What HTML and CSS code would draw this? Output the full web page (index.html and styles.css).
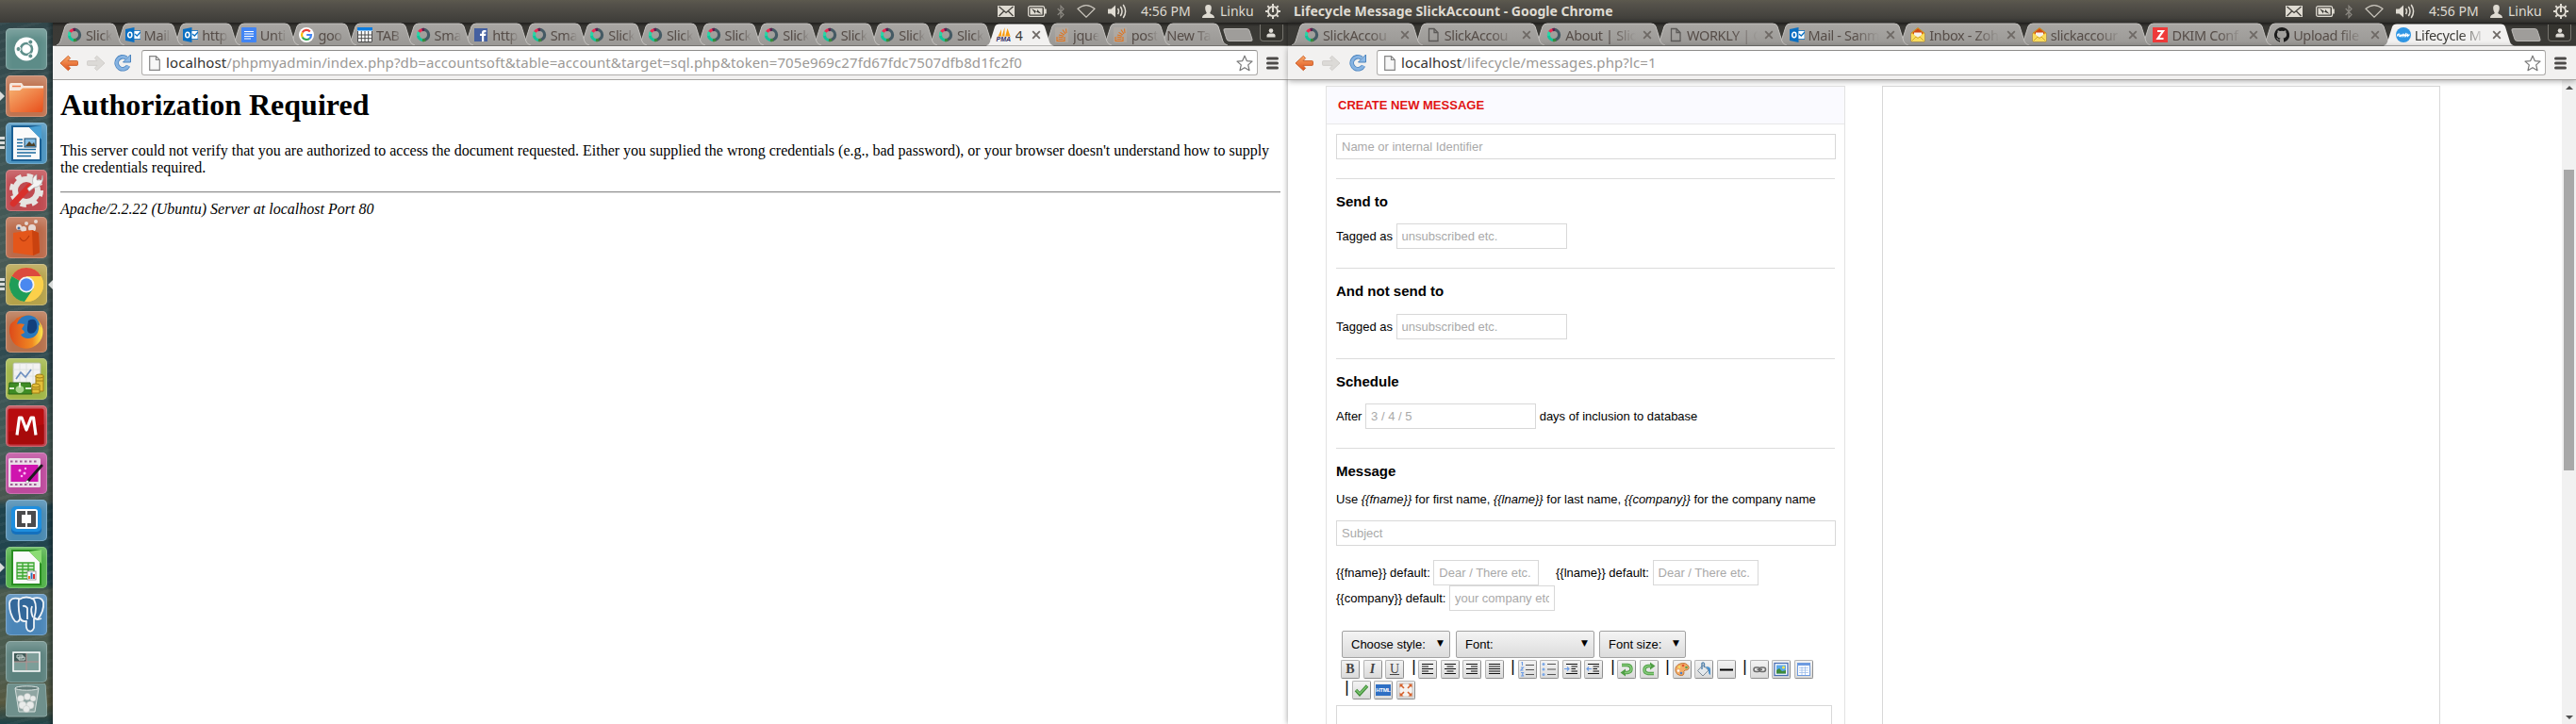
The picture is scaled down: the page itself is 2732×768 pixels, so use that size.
FILE: index.html
```html
<!DOCTYPE html>
<html lang="en">
<head>
<meta charset="utf-8">
<title>Lifecycle Message SlickAccount</title>
<link rel="stylesheet" href="styles.css">
</head>
<body>
<svg class="defs" width="0" height="0">
  <defs>
    <linearGradient id="gTab" x1="0" y1="0" x2="0" y2="1"><stop offset="0" stop-color="#a9a7a4"/><stop offset="1" stop-color="#9a9895"/></linearGradient>
    <linearGradient id="gOrange" x1="0" y1="0" x2="0" y2="1"><stop offset="0" stop-color="#f8a868"/><stop offset="1" stop-color="#e0521c"/></linearGradient>
    <linearGradient id="gFolder" x1="0" y1="0" x2="1" y2="1"><stop offset="0" stop-color="#f6b070"/><stop offset="1" stop-color="#e84e1a"/></linearGradient>
    <linearGradient id="gFox" x1="0" y1="0" x2="1" y2="0"><stop offset="0" stop-color="#dd4b1a"/><stop offset=".7" stop-color="#f08a22"/><stop offset="1" stop-color="#fbe34c"/></linearGradient>
  </defs>
  <symbol id="tab-s" viewBox="0 0 72 24"><path d="M0 24Q3 23 4 20L9 4Q10 1 14 1H57Q61 1 62 4L67 20Q68 23 72 24Z" fill="url(#gTab)"/><path d="M0 24Q3 23 4 20L9 4Q10 1 14 1H57Q61 1 62 4L67 20Q68 23 72 24" fill="none" stroke="#c3c1be" stroke-width="1"/></symbol>
  <symbol id="tab-s-on" viewBox="0 0 72 24"><path d="M0 24Q3 23 4 20L9 4Q10 1 14 1H57Q61 1 62 4L67 20Q68 23 72 24Z" fill="#f2f1f0"/></symbol>
  <symbol id="tab-l" viewBox="0 0 139 24"><path d="M0 24Q3 23 4 20L9 4Q10 1 14 1H124Q128 1 129 4L134 20Q135 23 139 24Z" fill="url(#gTab)"/><path d="M0 24Q3 23 4 20L9 4Q10 1 14 1H124Q128 1 129 4L134 20Q135 23 139 24" fill="none" stroke="#c3c1be"/></symbol>
  <symbol id="tab-l-on" viewBox="0 0 139 24"><path d="M0 24Q3 23 4 20L9 4Q10 1 14 1H124Q128 1 129 4L134 20Q135 23 139 24Z" fill="#f2f1f0"/></symbol>

  <symbol id="f-ring" viewBox="0 0 16 16"><g fill="none" stroke-width="3.200"><path d="M8 2.400A5.600 5.600 0 1 1 8 13.600" stroke="#455a64"/><path d="M8 13.600A5.600 5.600 0 0 1 2.400 8" stroke="#10c49a"/><path d="M2.500 9A5.600 5.600 0 0 1 3.500 4.700" stroke="#2ed3a4"/><path d="M3.400 4.800A5.600 5.600 0 0 1 7 2.500" stroke="#ee2a50"/><path d="M6.600 2.600A5.600 5.600 0 0 1 9 2.500" stroke="#5a2350"/><path d="M7 13.500A5.600 5.600 0 0 0 10 13.200" stroke="#3b8a3b"/></g></symbol>
  <symbol id="f-outlook" viewBox="0 0 16 16"><path d="M0 2L9.500 0V16L0 14Z" fill="#0a6fc2"/><path d="M9 3.500H16V12.500H9Z" fill="#fff" stroke="#0a6fc2" stroke-width=".8"/><path d="M10 7l2.300 2L16 5" fill="none" stroke="#0a6fc2" stroke-width="1.300"/><ellipse cx="4.800" cy="8" rx="2.100" ry="2.700" fill="none" stroke="#fff" stroke-width="1.500"/></symbol>
  <symbol id="f-doc" viewBox="0 0 16 16"><rect width="16" height="16" rx="1" fill="#4285f4"/><path d="M3 4.500H13M3 7H13M3 9.500H13M3 12H10" stroke="#fff" stroke-width="1.200"/></symbol>
  <symbol id="f-google" viewBox="0 0 16 16"><circle cx="8" cy="8" r="8" fill="#fff"/><g fill="none" stroke-width="2.200"><path d="M11.800 4.600A5 5 0 0 0 3.700 5.500" stroke="#ea4335"/><path d="M3.700 5.500A5 5 0 0 0 3.700 10.500" stroke="#fbbc05"/><path d="M3.700 10.500A5 5 0 0 0 11.300 11.800" stroke="#34a853"/><path d="M11.300 11.800A5 5 0 0 0 13 8H8.200" stroke="#4285f4"/></g></symbol>
  <symbol id="f-table" viewBox="0 0 16 16"><rect width="16" height="16" fill="#fff"/><path d="M.5 4V15.500H15.500V4M.5 8H15.500M.5 11.700H15.500M4.300 4V16M8 4V16M11.700 4V16" fill="none" stroke="#4b4b4b"/><rect width="16" height="3.500" fill="#0c7de0"/></symbol>
  <symbol id="f-facebook" viewBox="0 0 16 16"><rect x="1" y="1" width="14" height="14" fill="#4560a0"/><path d="M9 15V9H7V6.800H9V5.500Q9 3 11.500 3H13.500V5.200H12.200Q11.200 5.200 11.200 6.200V6.800H13.400L13.100 9H11.200V15Z" fill="#fff"/></symbol>
  <symbol id="f-so" viewBox="0 0 16 16"><rect x="1" width="14" height="16" fill="#b6aea5" opacity=".6"/><path d="M3 10V14.500H11V10M4.500 12.500H9.500M4.600 10.300L9.600 10.800M5 8L9.900 9.300M6.500 5.400L10.800 8M9 2.500L12 7M12.500 1.500L13 6" fill="none" stroke="#e2731b" stroke-width="1.100"/></symbol>
  <symbol id="f-page" viewBox="0 0 16 16"><path d="M3.500 1.500H9L13 5.500V14.500H3.500ZM9 1.500V5.500H13" fill="none" stroke="#5c5a58" stroke-width="1.300"/></symbol>
  <symbol id="f-zoho" viewBox="0 0 16 16"><path d="M1 6L8 .5L15 6V15H1Z" fill="#f3cb3a" stroke="#b98716" stroke-width=".8"/><path d="M2 6L8 1L14 6L8 10Z" fill="#d24a12"/><path d="M4 5.500H12V8L8 11L4 8Z" fill="#f6f3ee"/><path d="M1 6.500L8 11.500L15 6.500V15H1Z" fill="#f9dc5e"/><path d="M1.500 14.500L6 10L8 11.500L10 10L14.500 14.500" fill="none" stroke="#c99a1d" stroke-width=".8"/></symbol>
  <symbol id="f-z" viewBox="0 0 16 16"><rect width="16" height="16" fill="#ee3a3a"/><path d="M5 4H11L5.500 12H11.500" fill="none" stroke="#fff" stroke-width="2.200"/></symbol>
  <symbol id="f-github" viewBox="0 0 16 16"><path d="M8 0a8 8 0 0 0-2.500 15.600c.4.100.5-.2.500-.4v-1.500C3.800 14.200 3.300 12.800 3.300 12.800c-.4-.9-.9-1.200-.9-1.200-.7-.5.100-.5.100-.5.800.1 1.200.8 1.200.8.700 1.300 1.900.9 2.300.7.100-.5.300-.9.500-1.100-1.800-.2-3.600-.9-3.600-4 0-.9.300-1.600.8-2.200-.1-.2-.4-1 .1-2.100 0 0 .7-.2 2.200.8a7.500 7.500 0 0 1 4 0c1.500-1 2.200-.8 2.200-.8.400 1.100.2 1.900.1 2.100.5.600.8 1.300.8 2.200 0 3.100-1.900 3.800-3.700 4 .3.300.6.800.6 1.500v2.200c0 .2.100.500.6.400A8 8 0 0 0 8 0Z" fill="#1b1b1b"/></symbol>
  <symbol id="f-badge" viewBox="0 0 16 16"><circle cx="8" cy="8" r="8" fill="#2f96e4"/><path d="M1.500 9.500Q1.500 6.500 3.500 7Q2 9 4 9.500L5 7.500V9.500L7 7.500V9.500L8.500 7.500L9 9.500L11 6L10.500 9.500L12.500 7.500V9.500L14.500 7.500" fill="none" stroke="#fff" stroke-width="1.100"/></symbol>
  <symbol id="f-pma" viewBox="0 0 16 16"><path d="M1.500 9.500L5 2V9.500ZM5.500 9.500L8.500 0V9.500ZM9.200 9.500L11.500 1L14.500 9.500Z" fill="#f89c0e"/><path d="M1 10H15" stroke="#e9b86a"/></symbol>

  <symbol id="i-back" viewBox="0 0 20 18"><path d="M9.300 1.300L11.600 3.600L9 6.600H18.500Q19.500 6.600 19.500 7.600V10.400Q19.500 11.400 18.500 11.400H9L11.600 14.400L9.300 16.700L1 9Z" fill="url(#gOrange)" stroke="#c8602a" stroke-width=".9" stroke-linejoin="round"/></symbol>
  <symbol id="i-forward" viewBox="0 0 20 18"><path d="M10.700 1.300L8.400 3.600L11 6.600H1.500Q.5 6.600 .5 7.600V10.400Q.5 11.400 1.500 11.400H11L8.400 14.400L10.700 16.700L19 9Z" fill="#dcdad7" stroke="#cfcdca" stroke-width=".9" stroke-linejoin="round"/></symbol>
  <symbol id="i-reload" viewBox="0 0 18 18"><path d="M15 12.200A6.500 6.500 0 1 1 13 4" fill="none" stroke="#4a83bd" stroke-width="4.600"/><path d="M17.500 .5V8.500H9.500Z" fill="#8db9e6" stroke="#4a83bd" stroke-linejoin="round"/><path d="M15 12.200A6.500 6.500 0 1 1 13 4" fill="none" stroke="#86b3e2" stroke-width="3"/></symbol>
  <symbol id="i-file" viewBox="0 0 12 16"><path d="M.7.700H7.500L11.300 4.500V15.300H.7ZM7.500.7V4.500H11.300" fill="#f7f7f7" stroke="#858585" stroke-width="1.200"/></symbol>
  <symbol id="i-star" viewBox="0 0 18 18"><path d="M9 1.200L11.300 6.600L17 7.100L12.700 10.900L14 16.700L9 13.700L4 16.700L5.300 10.900L1 7.100L6.700 6.600Z" fill="#fff" stroke="#777" stroke-width="1.200" stroke-linejoin="round"/></symbol>
  <symbol id="i-menu" viewBox="0 0 13 14"><path d="M1.500 2H11.500M1.500 7H11.500M1.500 12H11.500" stroke="#4c4a48" stroke-width="3" stroke-linecap="round"/></symbol>
  <symbol id="i-close" viewBox="0 0 10 10"><path d="M1.200 1.200L8.800 8.800M8.800 1.200L1.200 8.800" stroke="#6e6965" stroke-width="1.800"/></symbol>
  <symbol id="i-person" viewBox="0 0 10 10"><circle cx="5" cy="2.600" r="2.300" fill="#dedbd5"/><path d="M.5 9.500V7.500Q.5 5.800 2.500 5.500H7.500Q9.500 5.800 9.500 7.500V9.500Z" fill="#dedbd5"/></symbol>

  <symbol id="t-mail" viewBox="0 0 18 12"><rect width="18" height="12" fill="#dfdbd2"/><path d="M1.500 1L9 7.500L16.500 1M1.500 11L6.500 6M16.500 11L11.500 6" fill="none" stroke="#45433e" stroke-width="1.300"/></symbol>
  <symbol id="t-battery" viewBox="0 0 20 12"><rect x=".6" y=".6" width="17" height="10.800" rx="2" fill="none" stroke="#dfdbd2" stroke-width="1.200"/><rect x="2.500" y="2.500" width="13" height="7" fill="#dfdbd2"/><rect x="18" y="3.500" width="1.800" height="5" fill="#dfdbd2"/><path d="M4 3L10 6.500V4L14.500 8.800L8 6.300V8.500Z" fill="#3c3b37"/></symbol>
  <symbol id="t-bluetooth" viewBox="0 0 8 14"><path d="M.7 3.500L7 10L4 13.200V.800L7 4L.7 10.500" fill="none" stroke="#8a8780" stroke-width="1.200"/></symbol>
  <symbol id="t-wifi" viewBox="0 0 20 14"><path d="M1 4.300Q10-3 19 4.300L10 13.200Z" fill="none" stroke="#c9c5bc" stroke-width="1.200"/></symbol>
  <symbol id="t-sound" viewBox="0 0 20 16"><path d="M0 5.500H3.500L8 1.500V14.500L3.500 10.500H0Z" fill="#dfdbd2"/><path d="M10.500 5Q12.500 8 10.500 11M13.300 3Q16.700 8 13.300 13M16.200 1Q21 8 16.200 15" fill="none" stroke="#dfdbd2" stroke-width="1.500"/></symbol>
  <symbol id="t-user" viewBox="0 0 13 14"><path d="M6.500 0C9 0 10 1.500 9.800 4C9.700 6 8.800 7.500 8.300 8.500C8.300 10.500 13 10 13 14H0C0 10 4.700 10.500 4.700 8.500C4.200 7.500 3.300 6 3.200 4C3 1.500 4 0 6.500 0Z" fill="#dfdbd2"/></symbol>
  <symbol id="t-gear" viewBox="0 0 16 16"><circle cx="8" cy="8" r="5" fill="none" stroke="#dfdbd2" stroke-width="1.900"/><path d="M8 0V9M2.300 2.300L4.400 4.400M13.700 2.300L11.600 4.400M0 8H3M13 8H16M2.300 13.700L4.400 11.600M13.700 13.700L11.600 11.600M8 13V16" stroke="#dfdbd2" stroke-width="2"/></symbol>
</svg>

<nav class="launcher">
  <div class="tile tile-dash"><svg viewBox="0 0 44 44"><circle cx="22" cy="22" r="12.500" fill="#fff"/><circle cx="22" cy="22" r="6" fill="none" stroke="#5f8f8b" stroke-width="2.600"/><g fill="#5f8f8b" stroke="#fff" stroke-width="1"><circle cx="13.500" cy="22" r="2.500"/><circle cx="26.300" cy="14.600" r="2.500"/><circle cx="26.300" cy="29.400" r="2.500"/></g></svg></div>
  <div class="tile tile-files"><i class="pip"></i><svg viewBox="0 0 44 44"><path d="M4 10Q4 8 6 8H17L19 11H40V18H4Z" fill="#f6e6dc"/><path d="M7 11.500H16" stroke="#ee7a4a" stroke-width="1.500"/><path d="M3.500 16H15L18 13.500H40.500L39.500 37Q39.500 39 37.500 39H6.500Q4.500 39 4.500 37Z" fill="url(#gFolder)"/></svg></div>
  <div class="tile tile-writer"><i class="pip pip-3"></i><svg viewBox="0 0 44 44"><path d="M6 3H38V41H6Z" fill="#1a5f93"/><path d="M8 5H25L36 16V39H8Z" fill="#fafafa"/><path d="M25 5L38 3V18Z" fill="#4aa0d4"/><path d="M12 18H18M12 21.500H18M12 25H18M12 28.500H32M12 32H32M12 35.500H27" stroke="#1b6a9e" stroke-width="1.500"/><rect x="20" y="17" width="12" height="9" fill="#86bfe6" stroke="#1b4d70"/><path d="M21 25L25 20L28 23L30 21L31.500 25Z" fill="#4d4128"/></svg></div>
  <div class="tile tile-settings"><svg viewBox="0 0 44 44"><circle cx="22" cy="22" r="12" fill="none" stroke="#e6e4e2" stroke-width="6"/><circle cx="22" cy="22" r="15.500" fill="none" stroke="#e6e4e2" stroke-width="5" stroke-dasharray="6.200 6"/><path d="M8 36L25 18" stroke="#d8302c" stroke-width="6.500" stroke-linecap="round"/><path d="M23 20L29 15Q27 8 33 5L33 11L38 11L39 6Q41 14 34 18L30 19L25 23Z" fill="#f4f4f4" stroke="#aaa" stroke-width=".7"/></svg></div>
  <div class="tile tile-store"><svg viewBox="0 0 44 44"><g fill="#e6d8d2"><circle cx="14" cy="11" r="3"/><circle cx="22" cy="7" r="2"/><circle cx="28" cy="12" r="4"/><circle cx="32" cy="5" r="2"/><circle cx="19" cy="13" r="3"/></g><circle cx="14" cy="12" r="1.500" fill="#46679a"/><path d="M8 17L28 14L35 17L36 38L29 41L8 38Z" fill="#e4561a"/><path d="M28 14L35 17L36 38L29 41Z" fill="#c9420f"/><path d="M15 22Q19 30 25 20" fill="none" stroke="#b83a0d" stroke-width="1.200"/></svg></div>
  <div class="tile tile-chrome"><i class="pip pip-3"></i><i class="pip pip-right"></i><svg viewBox="0 0 44 44"><circle cx="22" cy="22" r="18" fill="#fbd04a"/><path d="M22 22L6.400 13A18 18 0 0 1 37.600 13H22Z" fill="#dc4a3d"/><path d="M22 22L6.400 13A18 18 0 0 0 20 40L29.500 26Z" fill="#1f9d58"/><path d="M22 13H37.600A18 18 0 0 1 20.500 40L30 26Z" fill="#fbd04a"/><circle cx="22" cy="22" r="8.500" fill="#f3f3f3"/><circle cx="22" cy="22" r="6.700" fill="#4a88f0"/></svg></div>
  <div class="tile tile-firefox"><svg viewBox="0 0 44 44"><circle cx="22" cy="22" r="17.500" fill="url(#gFox)"/><circle cx="24" cy="17" r="12.500" fill="#2a78bd"/><path d="M24 10Q32 6 33 14Q34 20 30 23Q22 26 23 17Z" fill="#123f7c"/><path d="M5 14L8 11L10 15Q14 12 20 14L17 19Q20 21 20 23L16 25Q20 31 29 28Q36 24 35 14Q40 21 38 28Q33 39 22 39.500Q8 39 5 26Q3 20 5 14Z" fill="url(#gFox)"/></svg></div>
  <div class="tile tile-money"><svg viewBox="0 0 44 44"><rect x="8" y="5" width="29" height="28" rx="1.500" fill="#f2f2f2" stroke="#b8bfae"/><path d="M8 12H37M8 19H37M8 26H37M15 5V33M22 5V33M29 5V33" stroke="#dbe0dc" stroke-width=".8"/><path d="M11 22L16 15L21 20L27 12" fill="none" stroke="#6e8fc0" stroke-width="1.700"/><path d="M4 26H26L28 38H3Z" fill="#3f8c25" stroke="#2a6416"/><ellipse cx="15" cy="33" rx="4.500" ry="4" fill="#a7d48b"/><path d="M15 26V31M4 32H9M21 32H27" stroke="#dff0d3" stroke-width="2"/><g fill="#e4bf3a" stroke="#a07d14"><path d="M32 19V35H40V19Z"/><ellipse cx="36" cy="19" rx="4.300" ry="2"/><path d="M28 29V37H36V29Z"/><ellipse cx="32" cy="29" rx="4.300" ry="2"/><path d="M32 24H40M28 33H36" fill="none"/></g></svg></div>
  <div class="tile tile-m"><svg viewBox="0 0 44 44"><rect x="2.500" y="3.500" width="38" height="38" rx="2" fill="#b80c0e"/><path d="M3 41V28Q22 24 41 20V41Z" fill="#8e0808" opacity=".4"/><path d="M12 31.500L14.500 13H17L22 26L27 13H29.500L32 31.500" fill="none" stroke="#fff" stroke-width="3.200" stroke-linejoin="round"/></svg></div>
  <div class="tile tile-video"><svg viewBox="0 0 44 44"><rect x="3" y="6" width="34" height="31" rx="1.500" fill="#eadde8"/><path d="M5 9.500H35M5 34H35" stroke="#9b5e92" stroke-width="2.200" stroke-dasharray="2.500 2.500"/><rect x="5.500" y="13" width="29" height="18" fill="#cf14ae"/><g fill="#ffb6f2"><circle cx="15" cy="19" r="1.500"/><circle cx="20" cy="22" r="1.500"/><circle cx="17" cy="25" r="1.300"/><circle cx="21" cy="17" r="1.200"/></g><path d="M23 31L38 14" stroke="#1d1a1d" stroke-width="3" stroke-linecap="round"/><circle cx="23" cy="31" r="1.600" fill="#eee"/></svg></div>
  <div class="tile tile-brackets"><svg viewBox="0 0 44 44"><rect x="6" y="8" width="32" height="29" rx="5" fill="#1470bd"/><rect x="6" y="7" width="32" height="27" rx="5" fill="#1f8edd"/><rect x="10" y="10" width="24" height="21" rx="3" fill="#fff"/><path d="M12 12H21V16H17V25H21V29H12ZM23 12H32V29H23V25H27V16H23Z" fill="#4b4b4d"/></svg></div>
  <div class="tile tile-calc"><i class="pip"></i><svg viewBox="0 0 44 44"><path d="M6 3H38V41H6Z" fill="#2a8e22"/><path d="M8 5H25L36 16V39H8Z" fill="#fafafa"/><path d="M25 5L38 3V18Z" fill="#8bdc74"/><path d="M12 17H30V34H12ZM12 20.500H30M12 24H30M12 27.500H30M12 31H30M18 17V34M24 17V34" fill="#d5f0cf" stroke="#39a52f" stroke-width="1.300"/><rect x="23" y="26" width="9" height="9" fill="#fff" stroke="#777" stroke-width=".7"/><path d="M25 34V31" stroke="#f07b1e" stroke-width="2"/><path d="M27.500 34V27.500" stroke="#2b74b8" stroke-width="2"/><path d="M30 34V29" stroke="#d33" stroke-width="2"/></svg></div>
  <div class="tile tile-pg"><svg viewBox="0 0 44 44"><g fill="#33689a" stroke="#eef3f7" stroke-width="1.800" stroke-linejoin="round"><path d="M14 5Q5 3 4 10Q4 22 10 29Q13 31 15 27L17 12Z"/><path d="M28 5Q38 2 40 9Q41 18 34 27L28 24Z"/><path d="M14 6Q22 1 30 6Q34 14 30 26V36Q28 41 24 39Q21 37 22 29Q16 30 15 24Q13 14 14 6Z"/><path d="M30 26Q34 28 38 26M18 13Q21 12 23 15V27M28 13Q26 18 29 25" fill="none"/></g></svg></div>
  <div class="tile tile-spaces"><svg viewBox="0 0 44 44"><rect x="8" y="12" width="28" height="20" fill="#7d9e99" stroke="#fff" stroke-width="1.500"/><rect x="9" y="13" width="13" height="9" fill="#3f5a57"/><path d="M22 13V31M9 22H35" stroke="#b98d8d"/><path d="M12 15H18V18H12ZM14 17H20V20H14Z" fill="#4e6865" stroke="#ccd8d6"/></svg></div>
  <div class="trash"><svg viewBox="0 0 44 36"><path d="M4 0H40Q42 0 42.200 2L44 32Q44 35 41 35H3Q0 35 0 32L1.800 2Q2 0 4 0Z" fill="#6f908c" stroke="#8fa9a5"/><path d="M10 5L14 30H31L35 5Z" fill="#8fa5a2" stroke="#d5dedc"/><ellipse cx="22.500" cy="5" rx="12.500" ry="2.200" fill="#617b78" stroke="#d9e2e0"/><g fill="#e9ebea" stroke="#bfc5c3" stroke-width=".5"><circle cx="16" cy="16" r="3.500"/><circle cx="23" cy="14" r="3.500"/><circle cx="29" cy="16" r="3"/><circle cx="18" cy="23" r="4"/><circle cx="26" cy="23" r="4"/><circle cx="22" cy="27" r="3.500"/></g></svg></div>
</nav>

<header class="panel">
  <div class="bar">
    <div class="bar-title"></div>
    <div class="indicators"><svg class="t-mail"><use href="#t-mail"/></svg><svg class="t-battery"><use href="#t-battery"/></svg><svg class="t-bluetooth"><use href="#t-bluetooth"/></svg><svg class="t-wifi"><use href="#t-wifi"/></svg><svg class="t-sound"><use href="#t-sound"/></svg><span class="clock">4:56 PM</span><svg class="t-user"><use href="#t-user"/></svg><span class="user">Linku</span><svg class="t-gear"><use href="#t-gear"/></svg></div>
  </div>
  <div class="bar">
    <div class="bar-title">Lifecycle Message SlickAccount - Google Chrome</div>
    <div class="indicators"><svg class="t-mail"><use href="#t-mail"/></svg><svg class="t-battery"><use href="#t-battery"/></svg><svg class="t-bluetooth"><use href="#t-bluetooth"/></svg><svg class="t-wifi"><use href="#t-wifi"/></svg><svg class="t-sound"><use href="#t-sound"/></svg><span class="clock">4:56 PM</span><svg class="t-user"><use href="#t-user"/></svg><span class="user">Linku</span><svg class="t-gear"><use href="#t-gear"/></svg></div>
  </div>
</header>

<section class="window window-left">
  <div class="strip">
    <div class="tabs tabs-small" data-tabs="left"></div>
    <div class="new-tab"></div>
    <div class="profile"><svg><use href="#i-person"/></svg></div>
  </div>
  <div class="toolbar">
    <svg class="nav-back"><use href="#i-back"/></svg><svg class="nav-forward"><use href="#i-forward"/></svg><svg class="nav-reload"><use href="#i-reload"/></svg>
    <div class="omnibox"><svg class="omni-file"><use href="#i-file"/></svg><span class="url"><b>localhost</b>/phpmyadmin/index.php?db=accountsoft&amp;table=account&amp;target=sql.php&amp;token=705e969c27fd67fdc7507dfb8d1fc2f0</span><svg class="omni-star"><use href="#i-star"/></svg></div>
    <svg class="nav-menu"><use href="#i-menu"/></svg>
  </div>
  <article class="apache">
    <h1>Authorization Required</h1>
    <p>This server could not verify that you are authorized to access the document requested. Either you supplied the wrong credentials (e.g., bad password), or your browser doesn't understand how to supply the credentials required.</p>
    <hr>
    <address>Apache/2.2.22 (Ubuntu) Server at localhost Port 80</address>
  </article>
</section>

<section class="window window-right">
  <div class="strip">
    <div class="tabs tabs-large" data-tabs="right"></div>
    <div class="new-tab"></div>
    <div class="profile"><svg><use href="#i-person"/></svg></div>
  </div>
  <div class="toolbar">
    <svg class="nav-back"><use href="#i-back"/></svg><svg class="nav-forward"><use href="#i-forward"/></svg><svg class="nav-reload"><use href="#i-reload"/></svg>
    <div class="omnibox"><svg class="omni-file"><use href="#i-file"/></svg><span class="url"><b>localhost</b>/lifecycle/messages.php?lc=1</span><svg class="omni-star"><use href="#i-star"/></svg></div>
    <svg class="nav-menu"><use href="#i-menu"/></svg>
  </div>
  <div class="content">
    <main class="form-card">
      <h2 class="form-head">CREATE NEW MESSAGE</h2>
      <form class="form-body">
        <div class="block block-name"><input class="full" placeholder="Name or internal Identifier"></div>
        <div class="block"><h3>Send to</h3><div class="row">Tagged as <input class="mid" placeholder="unsubscribed etc."></div></div>
        <div class="block"><h3>And not send to</h3><div class="row">Tagged as <input class="mid" placeholder="unsubscribed etc."></div></div>
        <div class="block"><h3>Schedule</h3><div class="row">After <input class="mid" placeholder="3 / 4 / 5"> days of inclusion to database</div></div>
        <div class="message">
          <h3>Message</h3>
          <p>Use <i>{{fname}}</i> for first name, <i>{{lname}}</i> for last name, <i>{{company}}</i> for the company name</p>
          <input class="full" placeholder="Subject">
          <div class="row row-defaults">{{fname}} default: <input class="short" placeholder="Dear / There etc."><span class="second">{{lname}} default:</span> <input class="short" placeholder="Dear / There etc."></div>
          <div class="row">{{company}} default: <input class="short" placeholder="your company etc."></div>
          <div class="selects"><div class="select sel-style">Choose style:<span>▼</span></div><div class="select sel-font">Font:<span>▼</span></div><div class="select sel-size">Font size:<span>▼</span></div></div>
          <div class="tools">
            <div class="tool glyph"><b>B</b></div><div class="tool glyph"><b><i>I</i></b></div><div class="tool glyph"><u>U</u></div>
            <em class="sep"></em>
            <div class="tool"><svg viewBox="0 0 16 16"><path d="M2 2.500H14M2 5H9M2 7.500H14M2 10H9M2 12.500H14" class="ln"/></svg></div>
            <div class="tool"><svg viewBox="0 0 16 16"><path d="M2 2.500H14M4.500 5H11.500M2 7.500H14M4.500 10H11.500M2 12.500H14" class="ln"/></svg></div>
            <div class="tool"><svg viewBox="0 0 16 16"><path d="M2 2.500H14M7 5H14M2 7.500H14M7 10H14M2 12.500H14" class="ln"/></svg></div>
            <div class="tool"><svg viewBox="0 0 16 16"><path d="M2 2.500H14M2 5H14M2 7.500H14M2 10H14M2 12.500H14" class="ln"/></svg></div>
            <em class="sep"></em>
            <div class="tool"><svg viewBox="0 0 16 16"><path d="M6 3.500H15M6 8.500H15M6 13.500H15" class="ln gray"/><path d="M1.500 1L2.500 .5V4M1 6H3.500L1 9H3.500M1 11.500H3.500L2.500 13L3.500 15H1" class="blue"/></svg></div>
            <div class="tool"><svg viewBox="0 0 16 16"><path d="M6 2.500H15M6 8H15M6 13.500H15" class="ln gray"/><g fill="#7aa8e8"><circle cx="2" cy="2.500" r="1.500"/><circle cx="2" cy="8" r="1.500"/><circle cx="2" cy="13.500" r="1.500"/></g></svg></div>
            <div class="tool"><svg viewBox="0 0 16 16"><path d="M2 2.500H14M7.500 5H14M7.500 7.500H12M7.500 10H14M2 12.500H14" class="ln"/><path d="M0 7.500H5M3 5.500L5 7.500L3 9.500" class="blue"/></svg></div>
            <div class="tool"><svg viewBox="0 0 16 16"><path d="M2 2.500H14M7.500 5H14M7.500 7.500H12M7.500 10H14M2 12.500H14" class="ln"/><path d="M6 7.500H1M3 5.500L1 7.500L3 9.500" class="blue"/></svg></div>
            <em class="sep"></em>
            <div class="tool"><svg viewBox="0 0 16 16"><path d="M3 3.500H9Q13 4 13 7.500Q13 11 9 11.500H6" fill="none" stroke="#4f9e45" stroke-width="3.400"/><path d="M7 7.500V15.500L1.500 11.500Z" fill="#4f9e45"/><path d="M3 3.500H9Q13 4 13 7.500Q13 11 9 11.500H6" fill="none" stroke="#86cb7b" stroke-width="1.600"/></svg></div>
            <div class="tool"><svg viewBox="0 0 16 16"><path d="M13 12.500H7Q3 12 3 8.500Q3 5 7 4.500H10" fill="none" stroke="#4f9e45" stroke-width="3.400"/><path d="M9 .5V8.500L14.500 4.500Z" fill="#4f9e45"/><path d="M13 12.500H7Q3 12 3 8.500Q3 5 7 4.500H10" fill="none" stroke="#86cb7b" stroke-width="1.600"/></svg></div>
            <em class="sep"></em>
            <div class="tool"><svg viewBox="0 0 16 16"><path d="M1 10Q0 4 6 2Q12 0 15 5Q16 9 11 9Q9 10 10 12Q10 15 6 14.500Q2 14 1 10Z" fill="#f3ad68" stroke="#c47a3c"/><circle cx="5" cy="5.500" r="1.300" fill="#f3e26a"/><circle cx="9" cy="4" r="1.300" fill="#e0552e"/><circle cx="12.500" cy="6" r="1.300" fill="#5aa352"/><circle cx="4" cy="9.500" r="1.300" fill="#fff"/><circle cx="7" cy="12" r="1.300" fill="#4a7ec8"/></svg></div>
            <div class="tool"><svg viewBox="0 0 16 16"><path d="M1.500 9.500L7 3.500L13 9L7 15Z" fill="#e3e8ec" stroke="#7d8b96"/><path d="M6 8V1.500Q7.500 0 8.500 2V6" fill="none" stroke="#5483ad" stroke-width="1.400"/><path d="M10 5Q15 5 15 8V14Q12.500 13 13 9Z" fill="#478fce"/></svg></div>
            <div class="tool"><svg viewBox="0 0 16 16"><path d="M1 8.500H15" stroke="#000" stroke-width="2"/></svg></div>
            <em class="sep"></em>
            <div class="tool"><svg viewBox="0 0 16 16"><g fill="none" stroke="#6c6c6c" stroke-width="1.600"><rect x="2" y="6" width="6.500" height="4.500" rx="2.200"/><rect x="8" y="6" width="6.500" height="4.500" rx="2.200"/><path d="M5.500 8.200H11"/></g></svg></div>
            <div class="tool"><svg viewBox="0 0 16 16"><rect x="1" y="1.500" width="14" height="13" fill="#fff" stroke="#4a6fb5" stroke-width="1.300"/><rect x="3" y="3.500" width="10" height="9" fill="#5aa7e8"/><path d="M3 12.500V9L6 7L9 10L13 9V12.500Z" fill="#3f8a3a"/><circle cx="10.500" cy="6" r="1.500" fill="#f6e54c"/></svg></div>
            <div class="tool"><svg viewBox="0 0 16 16"><rect x="1.500" y="1.500" width="13" height="13" fill="#fff" stroke="#6d9be0"/><path d="M1.500 3H14.500" stroke="#6d9be0" stroke-width="2"/><path d="M3 6.500H13M3 9H13M3 11.500H13M6 5V14M9.500 5V14" stroke="#9dbdea" stroke-width=".8"/></svg></div>
          </div>
          <div class="tools tools-second">
            <em class="sep"></em>
            <div class="tool"><svg viewBox="0 0 16 16"><path d="M2 8L6 12.500L14 3.500" fill="none" stroke="#3f8c38" stroke-width="3.400"/><path d="M2.500 8.300L6 12L13.500 4" fill="none" stroke="#7cc56f" stroke-width="1.500"/></svg></div>
            <div class="tool tool-html"><span>HTML</span></div>
            <div class="tool"><svg viewBox="0 0 16 16"><rect x="1" y="1" width="14" height="14" fill="#f6f3f0" stroke="#c9c6c3"/><path d="M6 6L3 3M10 6L13 3M6 10L3 13M10 10L13 13" stroke="#d4602b" stroke-width="1.600"/><path d="M1.500 1.500H5.500L1.500 5.500ZM14.500 1.500H10.500L14.500 5.500ZM1.500 14.500H5.500L1.500 10.500ZM14.500 14.500H10.500L14.500 10.500Z" fill="#d4602b"/></svg></div>
          </div>
          <div class="editor"></div>
        </div>
      </form>
    </main>
    <aside class="preview"></aside>
    <div class="scrollbar"><span class="arrow arrow-up"></span><span class="thumb"></span><span class="arrow arrow-down"></span></div>
  </div>
</section>
<script src="tabs.js"></script>
</body>
</html>
```
FILE: styles.css
```css
* { box-sizing: border-box; }
body {
  margin: 0;
  width: 2732px;
  height: 768px;
  overflow: hidden;
  display: grid;
  grid-template-columns: 56px 1310px 1366px;
  grid-template-rows: 24px 744px;
  background: #fff;
}
svg { display: block; flex: none; }
.defs { position: absolute; }

/* top panel */
.panel {
  grid-column: 1 / -1;
  grid-row: 1;
  display: flex;
  background: linear-gradient(#5c594e, #54514a 20%, #3d3c38);
  font: 15px "Noto Sans", sans-serif;
  color: #dfdbd2;
}
.bar { width: 1366px; display: flex; justify-content: space-between; align-items: center; padding: 0 8px 0 6px; }
.bar-title { font-weight: 700; font-size: 14px; white-space: nowrap; letter-spacing: 0.02px; line-height: 24px; }
.indicators { display: flex; align-items: center; white-space: nowrap; line-height: 24px; }
.t-mail { width: 18px; height: 12px; margin-right: 14px; }
.t-battery { width: 20px; height: 12px; margin-right: 11px; }
.t-bluetooth { width: 8px; height: 15px; margin-right: 13px; }
.t-wifi { width: 20px; height: 14px; margin-right: 13px; }
.t-sound { width: 20px; height: 16px; margin-right: 15px; }
.clock { width: 52px; margin-right: 13px; font-size: 14px; }
.t-user { width: 13px; height: 14px; margin-right: 6px; }
.user { width: 35px; margin-right: 13px; font-size: 14px; }
.t-gear { width: 16px; height: 16px; }

/* launcher */
.launcher {
  grid-column: 1;
  grid-row: 2;
  display: flex;
  flex-direction: column;
  gap: 6px;
  padding: 6px 0 0 6px;
  background:
    linear-gradient(90deg, transparent 50px, rgba(0, 0, 0, .35)),
    repeating-linear-gradient(165deg, rgba(255, 255, 255, .04) 0 3px, transparent 3px 9px),
    linear-gradient(#31474b, #3f5656 20%, #4a5b55 36%, #2f4a50 46%, #465c57 60%, #4a5650 68%, #1f434c 69%, #23464f 80%, #4a5a4d 81%, #4b5c50 92%, #57583f 97%, #1d4248);
}
.tile { position: relative; width: 44px; height: 44px; border-radius: 5px; box-shadow: inset 0 0 0 1px rgba(255, 255, 255, .22), inset 0 7px 8px rgba(255, 255, 255, .2); }
.tile svg { width: 44px; height: 44px; }
.tile-dash { background: #5d8c88; }
.tile-files { background: #bf7350; }
.tile-writer { background: #4a93bf; }
.tile-settings { background: #bf4a50; }
.tile-store { background: #bb6a4a; }
.tile-chrome { background: #b5a24a; }
.tile-firefox { background: #b6714c; }
.tile-money { background: #9fb545; }
.tile-m { background: #bd3c46; }
.tile-video { background: #bd4a9c; }
.tile-brackets { background: #4788b0; }
.tile-calc { background: #4fb046; }
.tile-pg { background: #4b86b8; }
.tile-spaces { background: #5c827e; }
.trash { width: 44px; margin-top: -5px; }
.trash svg { width: 44px; height: 36px; }
.pip { position: absolute; left: -6px; top: 17px; width: 5px; height: 10px; background: #d9dcda; clip-path: polygon(0 0, 100% 50%, 0 100%); }
.pip-3 { top: 15px; height: 13px; clip-path: none; background: repeating-linear-gradient(#d9dcda 0 3px, transparent 3px 5px); }
.pip-right { left: 45px; clip-path: polygon(100% 0, 0 50%, 100% 100%); }

/* browser chrome */
.window { position: relative; grid-row: 2; display: flex; flex-direction: column; min-width: 0; }
.window-left { grid-column: 2; }
.window-right { grid-column: 3; box-shadow: 0 0 6px rgba(0, 0, 0, .4); }
.strip { height: 25px; display: flex; align-items: flex-start; padding-left: 4px; background: linear-gradient(#1f1e1c, #3a3935 4px, #3c3b37); box-shadow: inset 0 -1px #73716e; }
.tabs { display: flex; height: 25px; isolation: isolate; }
.tab { position: relative; height: 25px; display: flex; align-items: center; flex: none; }
.tab > svg:first-child { position: absolute; left: 0; top: 0; height: 24px; }
.tab.on > svg:first-child { height: 25px; }
.tabs-small .tab { width: 61.6px; padding-left: 11px; }
.tabs-small .tab > svg:first-child { width: 72px; }
.tabs-large .tab { width: 128.65px; padding-left: 13px; }
.tabs-large .tab > svg:first-child { width: 139px; }
.fav { position: relative; width: 16px; height: 16px; margin-right: 4px; }
.fav-pma { display: flex; flex-direction: column; }
.fav-pma svg { width: 16px; height: 10px; }
.fav-pma span { font: italic 700 7px/6px "Liberation Sans", sans-serif; color: #2d2d66; }
.tab-title {
  position: relative;
  font: 14.5px/24px "Noto Sans", sans-serif;
  letter-spacing: -.35px;
  color: #564d48;
  white-space: nowrap;
  overflow: hidden;
  width: 28px;
  -webkit-mask-image: linear-gradient(90deg, #000 60%, transparent);
  mask-image: linear-gradient(90deg, #000 60%, transparent);
}
.tabs-large .tab-title { width: 75px; margin-right: 7px; -webkit-mask-image: linear-gradient(90deg, #000 65%, transparent); mask-image: linear-gradient(90deg, #000 65%, transparent); }
.tab-title.bare { width: 48px; margin-left: -4px; }
.tab-title.solid { width: 9px; margin-right: 8px; -webkit-mask-image: none; mask-image: none; }
.on .tab-title { color: #3c3b37; }
.tab-close { position: relative; width: 10px; height: 10px; }
.new-tab { width: 28px; height: 14px; background: #9f9d9a; border: 1px solid #bab8b5; border-radius: 3px; transform: skewX(18deg); }
.window-left .new-tab { margin: 6px 0 0 7px; }
.window-right .new-tab { margin: 6px 0 0 9px; }
.profile { width: 25px; height: 18px; margin: 2px 0 0 9px; border: 1px solid #76746e; border-top: 0; border-radius: 0 0 4px 4px; display: flex; justify-content: center; align-items: center; background: #35342f; }
.profile svg { width: 10px; height: 10px; }
.toolbar { height: 36px; display: flex; align-items: center; background: #f2f1f0; border-bottom: 1px solid #a6a4a2; padding-left: 7px; border-top-left-radius: 4px; position: relative; z-index: 1; }
.nav-back { width: 20px; height: 18px; margin-right: 9px; }
.nav-forward { width: 20px; height: 18px; margin-right: 9px; }
.nav-reload { width: 18px; height: 19px; margin-right: 11px; }
.omnibox { width: 1184px; height: 27px; display: flex; align-items: center; border: 1px solid #b0aeac; border-top-color: #8f8d8b; border-radius: 3px; background: #fff; padding: 0 4px 0 7px; }
.window-right .omnibox { width: 1240px; }
.omni-file { width: 12px; height: 16px; margin-right: 6px; }
.url { flex: 1; font: 15px/23px "Noto Sans", sans-serif; padding-bottom: 1px; letter-spacing: .1px; color: #9b9996; white-space: nowrap; }
.url b { font-weight: 400; color: #33322f; }
.omni-star { width: 18px; height: 18px; }
.nav-menu { width: 13px; height: 14px; margin-left: 9px; }
.window-right .toolbar { box-shadow: 0 1px 6px rgba(0, 0, 0, .35); }

/* server error page */
.apache { padding: 8px; color: #000; font: 16px/18px "Liberation Serif", serif; }
.apache h1 { margin: 0 0 21px; font-size: 32px; line-height: 37px; }
.apache p { margin: 0 0 16px; }
.apache hr { margin: 0 0 8px; height: 2px; border: 0; border-top: 1px solid #8f8f8f; border-bottom: 1px solid #e4e4e4; }

/* message form */
.content { flex: 1; display: flex; align-items: flex-start; min-height: 0; overflow: hidden; background: #fff; padding-left: 40px; font: 13px/15px "Liberation Sans", Arial, sans-serif; color: #000; }
.form-card { width: 551px; height: 690px; margin-top: 6px; border: 1px solid #e2e2e2; border-bottom: 0; }
.form-head { margin: 0; height: 40px; padding-left: 12px; background: #fafaff; border-bottom: 1px solid #e8e8e8; font-size: 13px; line-height: 40px; color: #e11414; }
.form-body { padding: 10px 9px 0 10px; }
input { height: 27px; padding: 0 5px; border: 1px solid #d8d8d8; font: 13px "Liberation Sans", Arial, sans-serif; background: #fff; border-radius: 0; outline: 0; }
input::placeholder { color: #a9a9a9; opacity: 1; }
.full { width: 530px; display: block; }
.mid { width: 181px; }
.short { width: 112px; }
.block { width: 529px; height: 96px; border-bottom: 1px solid #dcdcdc; }
.block:nth-child(2), .block:nth-child(4) { height: 95px; }
.block-name { height: 48px; }
.block h3, .message h3 { margin: 0; padding-top: 15px; font-size: 15px; line-height: 17px; }
.block h3 { height: 47px; }
.block:nth-child(3) h3 { height: 48px; }
.row { display: flex; align-items: center; gap: 3.6px; height: 27px; white-space: nowrap; }
.message p { margin: 14px 0 11px; line-height: 15px; white-space: nowrap; }
.message .full { margin-top: 15px; }
.row-defaults { margin-top: 15px; }
.second { margin-left: 14px; }
.selects { display: flex; margin: 21px 0 2px 6px; gap: 6px; }
.select { height: 29px; border: 1px solid #a2a2a2; border-radius: 2px; background: linear-gradient(#f4f4f4, #dcdcdc); line-height: 27px; padding: 0 6px 0 9px; display: flex; justify-content: space-between; white-space: nowrap; }
.select span { font: 9px/25px "DejaVu Sans", sans-serif; }
.sel-style { width: 115px; }
.sel-font { width: 147px; }
.sel-size { width: 92px; margin-left: -1px; }
.tools { display: flex; height: 20px; margin-left: 5px; gap: 3.5px; }
.tools-second { margin: 2px 0 6px 10px; }
.tool { flex: none; width: 20px; height: 20px; border: 1px solid #8e8e8e; border-top-color: #b5b5b5; border-left-color: #b5b5b5; border-radius: 2px; background: linear-gradient(#f3f3f3, #dadada); display: flex; align-items: center; justify-content: center; }
.tool svg { width: 16px; height: 16px; }
.glyph { font: 14px/18px "Liberation Serif", serif; color: #444; }
.sep { flex: none; width: 3px; height: 16px; margin-left: 5px; background: linear-gradient(90deg, #f0b878 33%, #1a1530 33% 67%, #8ac4ee 67%); }
.tools-second .sep { margin-left: 0; }
.ln { stroke: #111; stroke-width: 1.1; fill: none; }
.gray { stroke: #555; }
.blue { stroke: #6a9be6; stroke-width: 1.1; fill: none; }
.tool-html span { width: 16px; height: 12px; background: #2f6fc4; color: #fff; font: 700 6px/12px "Liberation Sans", sans-serif; text-align: center; letter-spacing: -.3px; }
.editor { width: 526px; height: 60px; border: 1px solid #d8d8d8; }
.preview { width: 592px; height: 690px; margin: 6px 129px 0 39px; border: 1px solid #d8d8d8; border-bottom: 0; }
.scrollbar { width: 15px; height: 683px; background: #f1f1f1; display: flex; flex-direction: column; align-items: center; }
.arrow { width: 0; height: 0; border: 4px solid transparent; }
.arrow-up { border-bottom-color: #505050; margin-top: 2px; }
.thumb { width: 11px; height: 319px; margin-top: 85px; background: #a8a8a8; }
.arrow-down { border-top-color: #505050; margin-top: auto; margin-bottom: 1px; }
```
FILE: tabs.js
```js
const strips = {
  left: [
    ['ring', 'Slick'], ['outlook', 'Mail'], ['outlook', 'http'], ['doc', 'Unti'],
    ['google', 'goo'], ['table', 'TAB'], ['ring', 'Sma'], ['facebook', 'http'],
    ['ring', 'Sma'], ['ring', 'Slick'], ['ring', 'Slick'], ['ring', 'Slick'],
    ['ring', 'Slick'], ['ring', 'Slick'], ['ring', 'Slick'], ['ring', 'Slick'],
    ['pma', '4', true], ['so', 'jque'], ['so', 'post'], ['', 'New Ta'],
  ],
  right: [
    ['ring', 'SlickAccou'], ['page', 'SlickAccou'], ['ring', 'About | Slic'], ['page', 'WORKLY | C'],
    ['outlook', 'Mail - Sanm'], ['zoho', 'Inbox - Zoh'], ['zoho', 'slickaccour'], ['z', 'DKIM Conf'],
    ['github', 'Upload file'], ['badge', 'Lifecycle M', true],
  ],
};

for (const [side, list] of Object.entries(strips)) {
  const host = document.querySelector(`[data-tabs="${side}"]`);
  const size = side === 'left' ? 's' : 'l';
  list.forEach(([icon, title, on], i) => {
    const tab = document.createElement('div');
    tab.className = on ? 'tab on' : 'tab';
    tab.style.zIndex = on ? 50 : list.length - i;
    let fav = '';
    if (icon === 'pma') fav = '<div class="fav fav-pma"><svg viewBox="0 0 16 10"><use href="#f-pma" width="16" height="16"/></svg><span>PMA</span></div>';
    else if (icon) fav = `<svg class="fav"><use href="#f-${icon}"/></svg>`;
    const closable = side === 'right' || on;
    const kind = !icon ? ' bare' : (side === 'left' && on ? ' solid' : '');
    tab.innerHTML = `<svg preserveAspectRatio="none"><use href="#tab-${size}${on ? '-on' : ''}"/></svg>${fav}` +
      `<span class="tab-title${kind}">${title}</span>` +
      (closable ? '<svg class="tab-close"><use href="#i-close"/></svg>' : '');
    host.append(tab);
  });
}
```
